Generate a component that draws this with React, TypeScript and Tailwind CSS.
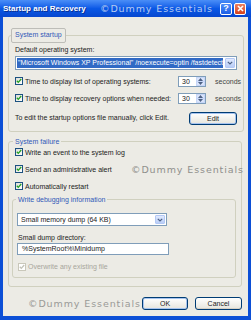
const font = "font-['Liberation_Sans',Arial,sans-serif]";
const mark = "font-['DejaVu_Sans',sans-serif] text-[9.5px] tracking-[0.9px] whitespace-nowrap";

function Check({ disabled = false, checked = true }: { disabled?: boolean; checked?: boolean }) {
  return (
    <span
      className={`flex h-[8px] w-[8px] shrink-0 items-center justify-center border ${
        disabled ? "border-[#c9c7ba] bg-white" : "border-[#1c5180] bg-gradient-to-br from-[#dcdcd7] to-white"
      }`}
    >
      {checked && (
        <svg width="6" height="6" viewBox="0 0 6 6">
          <path d="M0.8 2.8 L2.3 4.4 L5.2 1" fill="none" stroke={disabled ? "#c2c2b8" : "#21a121"} strokeWidth="1.3" />
        </svg>
      )}
    </span>
  );
}

function DropButton({ className = "" }: { className?: string }) {
  return (
    <span
      className={`flex w-[10px] items-center justify-center rounded-[1px] border border-[#b3c8f5] bg-gradient-to-b from-[#e1eafe] to-[#b9cdf6] ${className}`}
    >
      <svg width="6" height="4" viewBox="0 0 6 4">
        <path d="M0.8 0.8 L3 3 L5.2 0.8" fill="none" stroke="#4d6185" strokeWidth="1.2" />
      </svg>
    </span>
  );
}

function Spin() {
  return (
    <span className="flex h-[11px] w-[28px] shrink-0 border border-[#7f9db9] bg-white">
      <span className="flex-1 pl-[3px] leading-[9px]">30</span>
      <span className="flex w-[9px] flex-col gap-[1px] bg-[#c6d6f8] p-[1px]">
        <span className="flex flex-1 items-center justify-center rounded-[1px] bg-[#dbe5fb]">
          <svg width="5" height="3" viewBox="0 0 5 3">
            <path d="M0 3 L2.5 0 L5 3 Z" fill="#4d6185" />
          </svg>
        </span>
        <span className="flex flex-1 items-center justify-center rounded-[1px] bg-[#dbe5fb]">
          <svg width="5" height="3" viewBox="0 0 5 3">
            <path d="M0 0 L2.5 3 L5 0 Z" fill="#4d6185" />
          </svg>
        </span>
      </span>
    </span>
  );
}

function Button({ label, focus = false, className = "" }: { label: string; focus?: boolean; className?: string }) {
  return (
    <div
      className={`flex h-[13px] items-center justify-center rounded-[3px] border border-[#003c74] bg-gradient-to-b from-white to-[#e6e5dd] text-[7px] leading-none ${
        focus ? "shadow-[inset_0_0_0_1px_#a6c3ef]" : "shadow-[inset_0_-1px_0_#d6d0c5]"
      } ${className}`}
    >
      {label}
    </div>
  );
}

function Row({ label, children }: { label: string; children?: React.ReactNode }) {
  return (
    <div className="flex h-[12px] items-center gap-[2px]">
      <Check />
      <span className="flex-1 whitespace-nowrap leading-[9px]">{label}</span>
      {children}
    </div>
  );
}

export default function App() {
  return (
    <div className={`flex h-[320px] w-[251px] flex-col overflow-hidden bg-[#0c4fd6] text-[7px] text-[#222] ${font}`}>
      {/* title bar */}
      <div className="relative flex h-[17px] shrink-0 items-center bg-gradient-to-b from-[#4a8ef7] via-[#0a58e6] to-[#0747cf] pl-[3px] pr-[5px]">
        <span className="flex-1 text-[8px] font-bold leading-none text-white [text-shadow:1px_1px_0_#0a2f8f]">
          Startup and Recovery
        </span>
        <span className={`absolute left-[100px] top-[2px] text-[#b7cbf1] ${mark}`}>©Dummy Essentials</span>
        <div className="flex gap-[2px]">
          <span className="flex h-[12px] w-[12px] items-center justify-center rounded-[2px] border border-white bg-gradient-to-b from-[#4f8ef8] to-[#1c5ee6] text-[9px] font-bold leading-none text-white">
            ?
          </span>
          <span className="flex h-[12px] w-[12px] items-center justify-center rounded-[2px] border border-white bg-gradient-to-b from-[#ec7f5d] to-[#d5401a]">
            <svg width="7" height="7" viewBox="0 0 7 7">
              <path d="M1 1 L6 6 M6 1 L1 6" stroke="white" strokeWidth="1.6" />
            </svg>
          </span>
        </div>
      </div>

      {/* body */}
      <div className="relative mx-[3px] mb-[4px] flex flex-1 flex-col bg-[#ecebe5] pl-[5px] pr-[6px]">
        <fieldset className="mt-[11px] rounded-[3px] border border-[#d0d0bf] p-0">
          <legend className="ml-[2px] flex h-[15px] items-center rounded-[2px] border border-[#bdbdb8] px-[3px] text-[#3159b8]">
            System startup
          </legend>
          <div className="px-[6px] pb-[6px]">
            <div className="mt-[2px] h-[9px] leading-[9px]">Default operating system:</div>
            <div className="mt-[2px] flex h-[14px] border border-[#7f9db9] bg-white p-[1px]">
              <span className="mr-[2px] flex-1 overflow-hidden whitespace-nowrap bg-[#316ac5] pl-[1px] leading-[10px] text-white">
                "Microsoft Windows XP Professional" /noexecute=optin /fastdetect
              </span>
              <DropButton />
            </div>
            <div className="mt-[5px]">
              <Row label="Time to display list of operating systems:">
                <Spin />
                <span className="ml-[7px] mr-[-4px] w-[26px] whitespace-nowrap leading-[9px] text-[#444]">seconds</span>
              </Row>
            </div>
            <div className="mt-[5px]">
              <Row label="Time to display recovery options when needed:">
                <Spin />
                <span className="ml-[7px] mr-[-4px] w-[26px] whitespace-nowrap leading-[9px] text-[#444]">seconds</span>
              </Row>
            </div>
            <div className="mt-[8px] flex items-center">
              <span className="flex-1">To edit the startup options file manually, click Edit.</span>
              <Button label="Edit" focus className="w-[48px]" />
            </div>
          </div>
        </fieldset>

        <fieldset className="mt-[5px] rounded-[3px] border border-[#d0d0bf] p-0 pb-[8px]">
          <legend className="ml-[4px] px-[2px] leading-[9px] text-[#3159b8]">System failure</legend>
          <div className="px-[6px]">
            <Row label="Write an event to the system log" />
            <div className="mt-[5px]">
              <Row label="Send an administrative alert" />
            </div>
            <div className="mt-[5px]">
              <Row label="Automatically restart" />
            </div>
          </div>
          <fieldset className="ml-[3px] mr-[5px] mt-[3px] rounded-[3px] border border-[#d0d0bf] p-0 px-[4px] pb-[4px]">
            <legend className="ml-[-1px] px-[2px] leading-[9px] text-[#3159b8]">Write debugging information</legend>
            <div className="mt-[9px] flex h-[13px] w-[150px] border border-[#7f9db9] bg-white p-[1px]">
              <span className="flex-1 pl-[2px] leading-[9px]">Small memory dump (64 KB)</span>
              <DropButton />
            </div>
            <div className="ml-[1px] mt-[7px] h-[9px] leading-[9px]">Small dump directory:</div>
            <div className="mt-[1px] h-[12px] w-[152px] border border-[#7f9db9] bg-white pl-[4px] leading-[10px]">
              %SystemRoot%\Minidump
            </div>
            <div className="ml-[1px] mt-[6px] flex h-[12px] items-center gap-[2px] text-[#a7a69c]">
              <Check disabled />
              <span>Overwrite any existing file</span>
            </div>
          </fieldset>
        </fieldset>

        <span className={`absolute left-[128px] top-[146px] text-[#8f8f8c] ${mark}`}>©Dummy Essentials</span>

        <div className="relative mt-[10px] flex justify-end gap-[7px]">
          <span className={`absolute left-[20px] top-[0px] text-[#9a9a97] ${mark}`}>©Dummy Essentials</span>
          <Button label="OK" focus className="w-[46px]" />
          <Button label="Cancel" className="w-[47px]" />
        </div>
      </div>
    </div>
  );
}
